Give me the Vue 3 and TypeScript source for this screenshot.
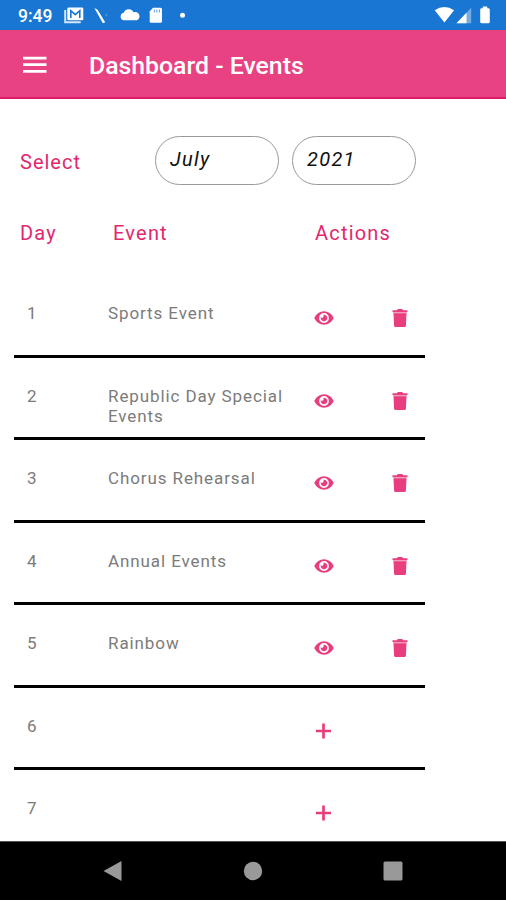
<script setup lang="ts">
import { ref } from 'vue'

interface DayEvent {
  day: number
  title: string
}

const month = ref('July')
const year = ref('2021')
const days: DayEvent[] = [
  { day: 1, title: 'Sports Event' },
  { day: 2, title: 'Republic Day Special Events' },
  { day: 3, title: 'Chorus Rehearsal' },
  { day: 4, title: 'Annual Events' },
  { day: 5, title: 'Rainbow' },
  { day: 6, title: '' },
  { day: 7, title: '' },
]
</script>

<template>
  <div class="screen">
    <header class="status">
      <span class="clock">9:49</span>
      <svg class="notifications" width="126" height="30" viewBox="0 0 126 30" fill="#fff">
        <path d="M5.200 10v12.200h15.500" fill="none" stroke="#d5e7fa" stroke-width="2" />
        <rect x="7.300" y="7.500" width="16" height="12.700" rx="1.300" />
        <path d="M10.800 18V10.700l4.500 4 4.500-4V18" fill="none" stroke="#1976d2" stroke-width="1.600" />
        <path d="M34.300 8l3.300 1.700 7.600 12.500-2.300 1z" />
        <path d="M45.500 13.500l1.800 1.500-1.500 1.200z" opacity=".35" />
        <path d="M64 20.300a3.800 3.800 0 0 1-.3-7.500 5.400 5.400 0 0 1 9.900-.5 4 4 0 0 1 3.200 8z" />
        <path d="M93 7.700h7.500q1.500 0 1.500 1.500v12q0 1.600-1.500 1.600h-9.300q-1.500 0-1.500-1.600V11.500z" />
        <path d="M94.300 9.500v3M96.800 9.500v3M99.300 9.500v3" stroke="#1976d2" stroke-width="1" opacity=".7" />
        <circle cx="122.500" cy="15.200" r="2.500" />
      </svg>
      <svg class="signals" width="60" height="30" viewBox="0 0 60 30" fill="#fff">
        <path d="M2.700 10.200q9.700-6.200 19.400 0L12.400 22.500z" />
        <path d="M39.200 7.800v15.400H24.500z" opacity=".4" />
        <path d="M34.500 12.700v10.500h-10z" />
        <path d="M50.800 6.600h4.400V8.300h1.100q1.500 0 1.500 1.400v12q0 1.500-1.500 1.500h-6.600q-1.500 0-1.500-1.500v-12q0-1.400 1.500-1.400h1.100z" />
      </svg>
    </header>

    <div class="toolbar">
      <svg class="menu" width="24" height="20" viewBox="0 0 24 20" fill="#fff">
        <path d="M0 1.700h23.500v2.800H0zM0 8.300h23.500v2.800H0zM0 15h23.500v2.800H0z" />
      </svg>
      <h1>Dashboard - Events</h1>
    </div>

    <main>
      <div class="filters">
        <span class="label">Select</span>
        <button class="pill">{{ month }}</button>
        <button class="pill">{{ year }}</button>
      </div>
      <div class="grid headings">
        <span>Day</span>
        <span>Event</span>
        <span>Actions</span>
      </div>
      <div v-for="item in days" :key="item.day" class="grid row">
        <span class="number">{{ item.day }}</span>
        <span class="title">{{ item.title }}</span>
        <div class="actions">
          <template v-if="item.title">
            <svg width="20" height="20" viewBox="0 0 20 20">
              <path fill="#e83e7f" fill-rule="evenodd" d="M.2 10Q3.600 3.300 10 3.300T19.800 10Q16.400 16.700 10 16.700T.2 10zM10 5.100a4.900 4.900 0 1 0 0 9.800 4.900 4.900 0 0 0 0-9.800z" />
              <path fill="#e83e7f" d="M10 6.700a3.300 3.300 0 1 1-3.200 2.500 1.700 1.700 0 0 0 2.400-2.400z" />
            </svg>
            <svg width="16" height="20" viewBox="0 0 16 20" fill="#e83e7f">
              <path d="M.5 2.200h4.400L5.700 1h4.600l.8 1.200h4.400v2H.5z" />
              <path d="M1.400 4h13.200v2H1.400z" opacity=".35" />
              <path d="M1.500 5.300h13l-.6 12.400q-.1 1.200-1.300 1.200H3.400q-1.200 0-1.300-1.200z" />
            </svg>
          </template>
          <svg v-else width="20" height="20" viewBox="0 0 20 20">
            <path d="M2 10h15M9.500 2.500v15" stroke="#e83e7f" stroke-width="2.700" />
          </svg>
        </div>
      </div>
    </main>

    <nav>
      <svg width="20" height="22" viewBox="0 0 20 22"><path d="M.5 11L18.500 1v20z" fill="#999" /></svg>
      <svg width="20" height="22" viewBox="0 0 20 22"><circle cx="10" cy="11" r="9.200" fill="#999" /></svg>
      <svg width="20" height="22" viewBox="0 0 20 22"><rect x=".5" y="1.500" width="19" height="19" rx="1.500" fill="#999" /></svg>
    </nav>
  </div>
</template>

<style>
body {
  margin: 0;
}
</style>

<style scoped>
.screen {
  width: 506px;
  height: 900px;
  display: flex;
  flex-direction: column;
  overflow: hidden;
  background: #fff;
  font-family: Roboto, sans-serif;
}
svg {
  display: block;
  flex: none;
}
.status {
  flex: none;
  height: 30px;
  display: flex;
  align-items: center;
  padding-left: 18px;
  background: #1976d2;
  color: #fff;
}
.clock {
  width: 42px;
  font-size: 17.5px;
  font-weight: 500;
  line-height: 30px;
  padding-top: 1px;
  box-sizing: border-box;
  height: 30px;
}
.signals {
  margin-left: auto;
  margin-right: 14px;
}
.toolbar {
  flex: none;
  box-sizing: border-box;
  height: 69px;
  display: flex;
  align-items: center;
  padding-left: 23px;
  background: #e84282;
  border-bottom: 2px solid #dc1b69;
}
.menu {
  margin-top: 2px;
}
h1 {
  margin: 5px 0 0 42px;
  color: #fff;
  font-size: 24.8px;
  font-weight: 500;
  line-height: 30px;
}
main {
  flex: 1;
  min-height: 0;
  overflow: hidden;
}
.filters {
  display: flex;
  align-items: center;
  padding: 37px 0 0 20px;
}
.label {
  width: 135px;
  padding-top: 3px;
}
.label,
.headings {
  color: #e1286e;
  font-size: 20px;
  line-height: 24px;
  letter-spacing: 1.2px;
}
.label {
  letter-spacing: 1px;
}
.pill {
  box-sizing: border-box;
  width: 124px;
  height: 49px;
  margin-right: 13px;
  padding: 0 0 3px 14px;
  border: 1px solid #999;
  border-radius: 25px;
  background: #fff;
  color: #111;
  font: italic 20px Roboto, sans-serif;
  letter-spacing: 1.3px;
  text-align: left;
}
.headings {
  grid-template-columns: 93px 202px 1fr;
  padding: 36px 0 30px 20px;
}
.grid {
  display: grid;
}
.row {
  box-sizing: border-box;
  width: 411px;
  height: 82.5px;
  margin-left: 13.5px;
  padding: 28px 0 0 13.5px;
  grid-template-columns: 81px 205px 1fr;
  align-items: start;
  background: linear-gradient(#000, #000) bottom / 100% 3px no-repeat;
  color: #7b7b7b;
  font-size: 17px;
  line-height: 20px;
  letter-spacing: 0.9px;
}
.title {
  width: 190px;
}
.actions {
  display: flex;
  justify-content: space-between;
  padding: 5px 17px 0 0.5px;
}
nav {
  flex: none;
  box-sizing: border-box;
  height: 59px;
  display: flex;
  justify-content: space-between;
  padding: 18px 103px 0 102.5px;
  background: #000;
  border-top: 1px solid #555;
}
</style>
